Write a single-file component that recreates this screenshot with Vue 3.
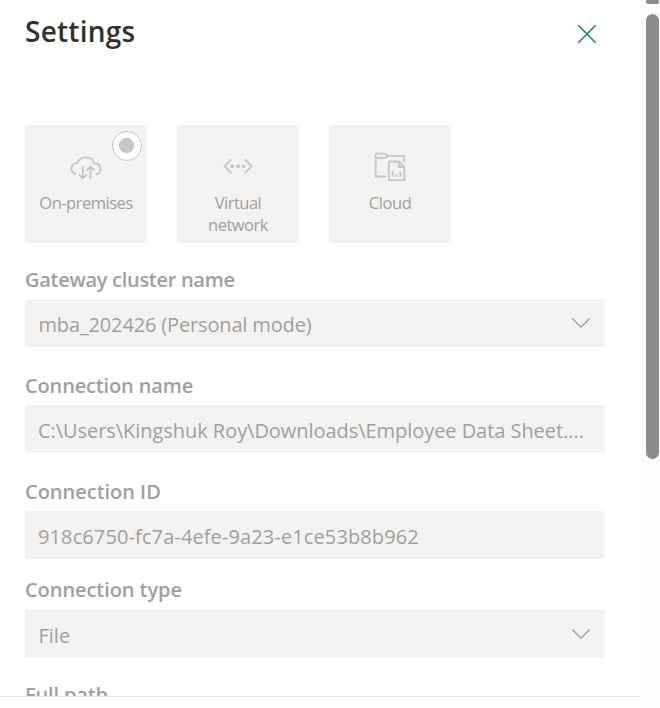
<script setup>
const fields = [
  { label: 'Gateway cluster name', value: 'mba_202426 (Personal mode)', kind: 'select', key: 'gateway' },
  { label: 'Connection name', value: 'C:\\Users\\Kingshuk Roy\\Downloads\\Employee Data Sheet....', kind: 'input', key: 'name' },
  { label: 'Connection ID', value: '918c6750-fc7a-4efe-9a23-e1ce53b8b962', kind: 'input', key: 'id' },
  { label: 'Connection type', value: 'File', kind: 'select', key: 'type' },
]
</script>

<template>
  <div class="page">
    <main class="panel">
      <div class="content">
        <header class="header">
          <h1><span>Settings</span></h1>
          <button class="close" aria-label="Close">
            <svg width="20" height="20" viewBox="0 0 20 20"><path d="M1.300 1.300 18.700 18.700M18.700 1.300 1.300 18.700" /></svg>
          </button>
        </header>

        <div class="cards">
          <div class="card">
            <svg class="icon" width="32" height="32" viewBox="0 0 32 32">
              <path d="M6 24.200C3.300 23.500 1.500 21.500 1.500 18.700C1.500 15.200 4 12.800 7.300 13.200C8.600 9.600 11.800 7.400 16 7.400C20.200 7.400 23.300 9.900 24 13.400C27.700 13 30.500 15.500 30.500 19C30.500 21.800 28.600 23.800 25.800 24.400" />
              <path d="M12.800 16V28.300M8.900 24.500 12.800 28.400 16.700 24.500M20.500 29V16.800M16.600 20.500 20.500 16.600 24.400 20.500" />
            </svg>
            <span class="on-premises">On-premises</span>
            <i class="radio"></i>
          </div>
          <div class="card">
            <svg class="icon" width="32" height="32" viewBox="0 0 32 32">
              <path d="M9.200 9.300 2.500 16.200 9.200 23.100M22.800 9.300 29.500 16.200 22.800 23.100" />
              <g class="dots"><circle cx="10.300" cy="16.200" r="1.900" /><circle cx="16" cy="16.200" r="1.900" /><circle cx="21.700" cy="16.200" r="1.900" /></g>
            </svg>
            <span class="virtual">Virtual<br />network</span>
          </div>
          <div class="card">
            <svg class="icon" width="32" height="32" viewBox="0 0 32 32">
              <path d="M12 26.500H1.700V4.500Q1.700 3.700 2.700 3.700H11L14 5.800H30.300V12M1.700 7.800H11L14 5.800" />
              <path d="M14.800 11.500H25L30.300 16.800V30.200H14.800ZM24.700 11.500V17H30.300M18.700 20.500V27M22.500 24V27M26.300 22V27" />
            </svg>
            <span class="cloud">Cloud</span>
          </div>
        </div>

        <section v-for="f in fields" :key="f.key" class="field" :class="f.key">
          <label><span>{{ f.label }}</span></label>
          <div class="box" :class="f.kind">
            <span class="value">{{ f.value }}</span>
            <svg v-if="f.kind === 'select'" width="20" height="12" viewBox="0 0 20 12"><path d="M1.300 1.500 10 10.200 18.700 1.500" /></svg>
          </div>
        </section>
        <section class="field path"><label><span>Full path</span></label></section>
      </div>
      <footer class="footer"></footer>
    </main>
    <aside class="scroll">
      <div class="cap"></div>
      <div class="thumb"></div>
    </aside>
  </div>
</template>

<style>
body { margin: 0; background: #fff; overflow: hidden; }
</style>

<style scoped>
.page { display: flex; width: 660px; height: 708px; background: #fff; font-family: "Open Sans", "Noto Sans", sans-serif; color: #a19f9d; }
.panel { width: 641px; height: 708px; display: flex; flex-direction: column; }
.content { height: 696px; box-sizing: border-box; padding: 0 36px 0 25px; overflow: hidden; flex: none; }
.footer { height: 11px; border-top: 1px solid #e6e5e4; }
.header { display: flex; justify-content: space-between; height: 125px; }
h1 { margin: 12px 0 0; font-size: 28px; line-height: 38px; height: 38px; font-weight: 600; color: #323130; letter-spacing: 0.250px; }
.close { margin: 24px 8px 0 0; width: 20px; height: 20px; padding: 0; border: 0; background: none; }
.close svg { display: block; fill: none; stroke: #10806f; stroke-width: 1.500; }
.cards { display: flex; gap: 30px; height: 118px; }
.card { position: relative; width: 122px; box-sizing: border-box; padding-top: 25px; background: #f3f2f1; display: flex; flex-direction: column; align-items: center; text-align: center; font-size: 16.500px; line-height: 22px; }
.card span { margin-top: 10px; white-space: nowrap; }
.icon { fill: none; stroke: #c8c6c4; stroke-width: 1.800; flex: none; }
.dots { fill: #c8c6c4; stroke: none; }
.radio { position: absolute; top: 6px; right: 5px; width: 28px; height: 28px; border: 1px solid #c8c6c4; border-radius: 50%; background: radial-gradient(circle at 13.500px 13.500px, #c8c6c4 7.200px, #fff 7.900px); }
.on-premises { letter-spacing: -0.500px; }
.virtual { letter-spacing: -0.500px; }
.cloud { letter-spacing: -0.400px; }
.field { height: 106px; box-sizing: border-box; padding-top: 25px; }
.gateway { padding-top: 23px; height: 104px; --label-track: -0.290px; --value-track: -0.150px; }
.name { --label-track: -0.150px; --value-track: -0.050px; }
.id { --label-track: -0.020px; --value-track: 0.110px; }
.type { padding-top: 17px; height: 99px; --label-track: -0.070px; --value-track: 0; }
.path { padding-top: 23px; --label-track: -0.150px; }
label { display: block; height: 33px; line-height: 27px; font-size: 20px; font-weight: 600; letter-spacing: var(--label-track); white-space: nowrap; }
.type label { height: 34px; }
.box { height: 48px; box-sizing: border-box; padding: 0 14px 0 13px; background: #f3f2f1; display: flex; align-items: center; justify-content: space-between; font-size: 20px; line-height: 28px; letter-spacing: var(--value-track); }
.box.input { border-radius: 3px; }
.box.select { padding-left: 13.500px; }
.value { padding-top: 3px; white-space: pre; }
.box svg { fill: none; stroke: #a19f9d; stroke-width: 1.300; flex: none; }
.scroll { width: 19px; box-sizing: border-box; padding-left: 5px; background: #fcfcfc; }
.cap { width: 13px; height: 4px; border-radius: 1px 1px 2px 2px; background: #8b8b8b; }
.thumb { width: 13px; height: 445px; margin-top: 10px; border-radius: 7px; background: #8b8b8b; }
</style>
